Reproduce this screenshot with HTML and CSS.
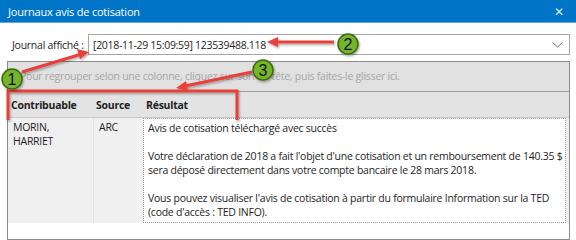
FILE: index.html
```html
<!DOCTYPE html>
<html lang="fr">
<head>
    <meta charset="UTF-8">
    <meta name="viewport" content="width=device-width, initial-scale=1.0">
    <title>Journaux avis de cotisation</title>
    <link rel="stylesheet" href="styles.css">
</head>
<body>
    <div class="window">
        <div class="titlebar">
            <span class="title">Journaux avis de cotisation</span>
            <span class="close">&#x2715;</span>
        </div>

        <div class="content">
            <div class="journal-row">
                <label class="journal-label">Journal affiché :</label>
                <div class="combo">
                    <span class="combo-text">[2018-11-29 15:09:59] 123539488.118</span>
                    <svg class="chevron" width="11" height="6" viewBox="0 0 11 6">
                        <path d="M0.5 0.5 L5.5 5 L10.5 0.5" fill="none" stroke="#6b6b6b" stroke-width="1"/>
                    </svg>
                </div>
            </div>

            <div class="grid">
                <div class="group-panel">Pour regrouper selon une colonne, cliquez sur son en-tête, puis faites-le glisser ici.</div>
                <div class="grid-header">
                    <div class="col col-contrib">Contribuable</div>
                    <div class="col col-source">Source</div>
                    <div class="col col-result">Résultat</div>
                </div>
                <div class="grid-row">
                    <div class="cell col-contrib">MORIN,<br>HARRIET</div>
                    <div class="cell col-source">ARC</div>
                    <div class="cell col-result result-box">
                        <p>Avis de cotisation téléchargé avec succès</p>
                        <p>Votre déclaration de 2018 a fait l'objet d'une cotisation et un remboursement de 140.35 $ sera déposé directement dans votre compte bancaire le 28 mars 2018.</p>
                        <p>Vous pouvez visualiser l'avis de cotisation à partir du formulaire Information sur la TED (code d'accès : TED INFO).</p>
                    </div>
                </div>
                <div class="grid-empty"></div>
            </div>
            <div class="grip"></div>
        </div>

        <!-- annotations posées par-dessus la capture -->
        <svg class="annotations" width="576" height="240" viewBox="0 0 576 240">
            <defs>
                <filter id="shadow" x="-20%" y="-20%" width="140%" height="140%">
                    <feDropShadow dx="1" dy="1.5" stdDeviation="1" flood-color="#000" flood-opacity="0.35"/>
                </filter>
            </defs>
            <g filter="url(#shadow)" fill="#e8413b" stroke="#e8413b">
                <path d="M8 120 V91 H237 V120" fill="none" stroke-width="3"/>
                <line x1="22" y1="72" x2="80" y2="54.5" stroke-width="3"/>
                <polygon points="89,52 77,49 80,59" stroke="none"/>
                <line x1="334" y1="42" x2="277" y2="42" stroke-width="3"/>
                <polygon points="267,42 278,37 278,47" stroke="none"/>
                <line x1="252" y1="72" x2="185" y2="86" stroke-width="3"/>
                <polygon points="176,88 186,81 188,91" stroke="none"/>
            </g>
            <g filter="url(#shadow)" fill="#74b52b" stroke="#3e6a10" stroke-width="1.5">
                <circle cx="12" cy="79" r="10"/>
                <circle cx="348" cy="44" r="10"/>
                <circle cx="263" cy="70" r="10"/>
            </g>
            <g class="badge-text">
                <text x="12" y="85">1</text>
                <text x="348" y="50">2</text>
                <text x="263" y="76">3</text>
            </g>
        </svg>
    </div>
</body>
</html>
```

FILE: styles.css
```css
* {
    box-sizing: border-box;
}
body {
    margin: 0;
    font-family: "Open Sans", "Noto Sans", sans-serif;
    font-size: 10.5px;
    letter-spacing: -0.25px;
    color: #1e1e1e;
    background-color: #ffffff;
}
.window {
    position: relative;
    width: 576px;
    height: 240px;
    overflow: hidden;
}
.titlebar {
    height: 23px;
    background-color: #0074c6;
    border-bottom: 1px solid #5ea6dc;
    display: flex;
    align-items: center;
    justify-content: space-between;
    padding: 0 12px 0 8px;
    color: #ffffff;
}
.title {
    font-size: 11px;
    letter-spacing: -0.2px;
}
.close {
    font-size: 12px;
    color: #dfeaf5;
}
.content {
    padding: 11px 6px 0 7px;
}
.journal-row {
    display: flex;
    align-items: center;
    gap: 3px;
    height: 21px;
}
.journal-label {
    padding-left: 5px;
    width: 78px;
    white-space: nowrap;
}
.combo {
    flex: 1;
    height: 21px;
    border: 1px solid #a6a6a6;
    display: flex;
    align-items: center;
    justify-content: space-between;
    padding: 0 6px 0 4px;
    font-size: 10.5px;
    letter-spacing: -0.3px;
}
.grid {
    margin-top: 6px;
    width: 563px;
    border: 1px solid #8c8c8c;
    background-color: #ffffff;
}
.group-panel {
    height: 30px;
    line-height: 29px;
    padding-left: 12px;
    background-color: #e1e1e1;
    border-bottom: 1px solid #a0a0a0;
    color: #a6a6a6;
}
.grid-header {
    display: flex;
    height: 26px;
    align-items: flex-end;
    padding-bottom: 1px;
    background-color: #e3e3e3;
    border-bottom: 1px solid #c9c9c9;
    font-weight: bold;
}
.grid-header .col {
    padding: 0 0 4px 3px;
}
.col-contrib {
    width: 85px;
}
.col-source {
    width: 50px;
}
.col-result {
    flex: 1;
}
.grid-row {
    display: flex;
    background-color: #f0f0f0;
}
.cell {
    padding: 2px 0 0 5px;
    line-height: 14px;
}
.col-source.cell {
    border-left: 1px solid #e2e2e2;
    padding-left: 5px;
}
.result-box {
    background-color: #ffffff;
    border: 1px dotted #9a9a9a;
    margin-right: 3px;
    padding: 2px 1px 3px 4px;
}
.result-box p {
    margin: 0 0 14px 0;
}
.result-box p:last-child {
    margin-bottom: 0;
}
.grid-empty {
    height: 16px;
}
.grip {
    width: 6px;
    height: 5px;
    margin: 1px 0 0 278px;
    border: 1px solid #444444;
    background-color: #f4f4f4;
}
.annotations {
    position: absolute;
    left: 0;
    top: 0;
}
.badge-text text {
    font-family: "Liberation Sans", Arial, sans-serif;
    font-size: 16px;
    letter-spacing: 0;
    fill: #111111;
    text-anchor: middle;
}
```
